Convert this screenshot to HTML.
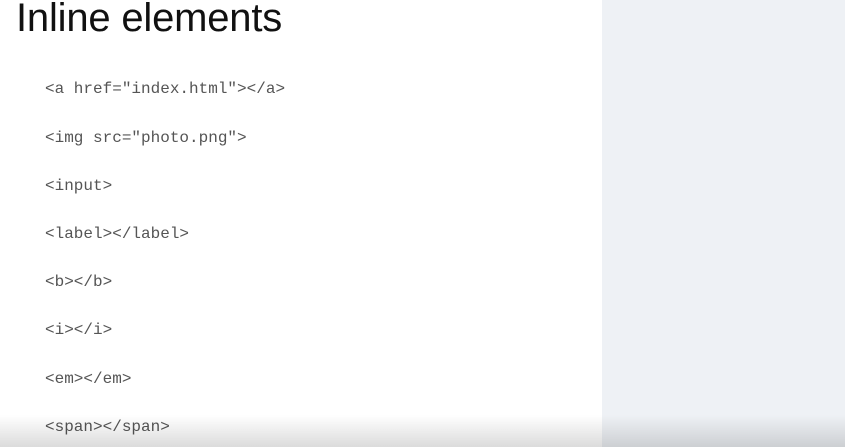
<!DOCTYPE html>
<html><head><style>
html,body{margin:0;padding:0}
body{width:845px;height:447px;position:relative;overflow:hidden;background:#fff;font-family:"Liberation Sans",sans-serif}
.right{position:absolute;left:602px;top:0;width:243px;height:447px;background:#eef1f5}
h1{position:absolute;left:16px;top:-6px;margin:0;font-size:40px;font-weight:400;color:#111;letter-spacing:-0.2px;line-height:48px}
.c{position:absolute;left:45px;font-family:"Liberation Mono",monospace;font-size:16px;color:#555;line-height:20px}
.shade{position:absolute;left:0;top:415px;width:845px;height:32px;background:linear-gradient(rgba(0,0,0,0),rgba(0,0,0,0.14))}
</style></head><body>
<div class="right"></div>
<h1>Inline elements</h1>
<div class="c" style="top:79px">&lt;a href="index.html"&gt;&lt;/a&gt;</div>
<div class="c" style="top:128px">&lt;img src="photo.png"&gt;</div>
<div class="c" style="top:176px">&lt;input&gt;</div>
<div class="c" style="top:224px">&lt;label&gt;&lt;/label&gt;</div>
<div class="c" style="top:272px">&lt;b&gt;&lt;/b&gt;</div>
<div class="c" style="top:320px">&lt;i&gt;&lt;/i&gt;</div>
<div class="c" style="top:369px">&lt;em&gt;&lt;/em&gt;</div>
<div class="c" style="top:417px">&lt;span&gt;&lt;/span&gt;</div>
<div class="shade"></div>
</body></html>
